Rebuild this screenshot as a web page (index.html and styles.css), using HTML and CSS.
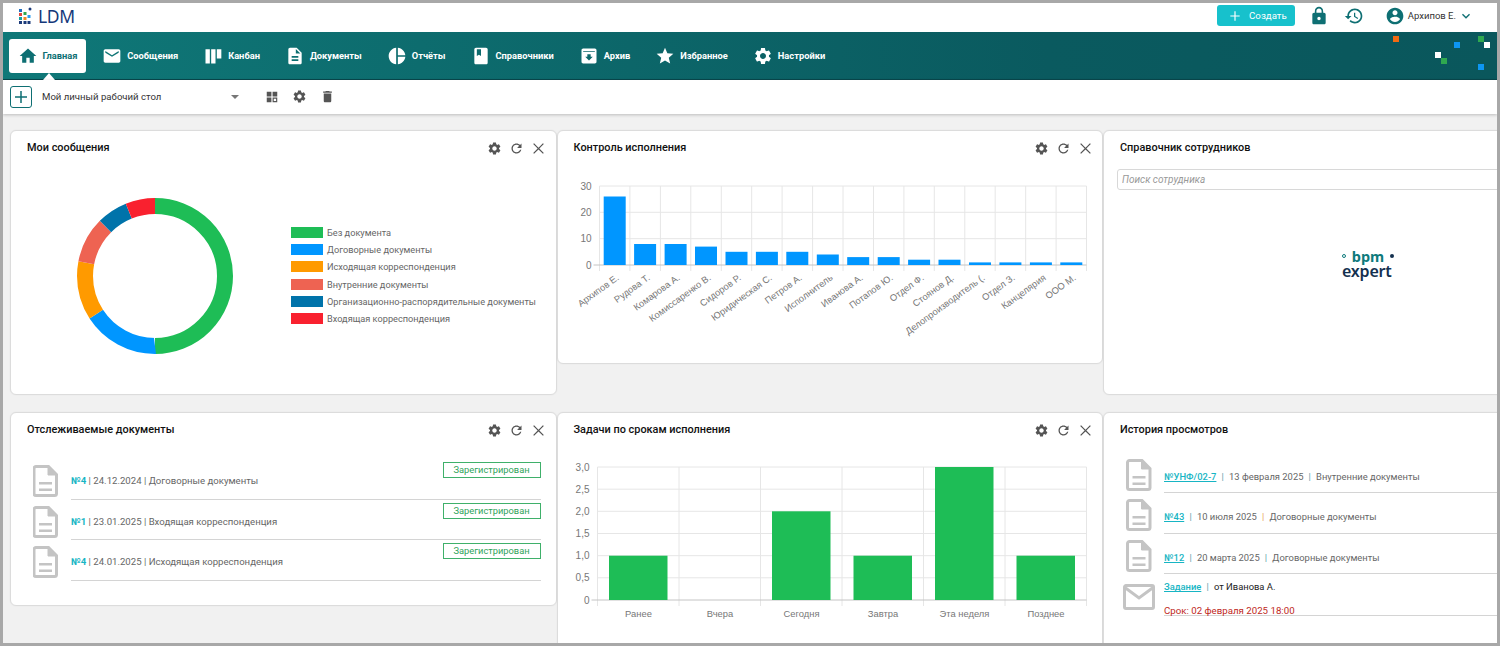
FILE: index.html
```html
<!DOCTYPE html>
<html lang="ru">
<head>
<meta charset="utf-8">
<title>LDM</title>
<link rel="stylesheet" href="styles.css">
</head>
<body>
<svg class="sprite" aria-hidden="true">
  <symbol id="i-home" viewBox="0 0 24 24"><path d="M10 20v-6h4v6h5v-8h3L12 3 2 12h3v8z"/></symbol>
  <symbol id="i-mail" viewBox="0 0 24 24"><path d="M20 4H4c-1.1 0-1.99.9-1.99 2L2 18c0 1.1.9 2 2 2h16c1.1 0 2-.9 2-2V6c0-1.1-.9-2-2-2zm0 4l-8 5-8-5V6l8 5 8-5v2z"/></symbol>
  <symbol id="i-kanban" viewBox="0 0 24 24"><path d="M3 4h5.2v17H3zM9.8 4H15v17H9.8zM16.6 4H22v11h-5.4z"/></symbol>
  <symbol id="i-doc" viewBox="0 0 24 24"><path d="M14 2H6c-1.1 0-1.99.9-1.99 2L4 20c0 1.1.89 2 1.99 2H18c1.1 0 2-.9 2-2V8l-6-6zm2 16H8v-2h8v2zm0-4H8v-2h8v2zm-3-5V3.5L18.5 9H13z"/></symbol>
  <symbol id="i-pie" viewBox="0 0 24 24"><path d="M11 2v20c-5.07-.5-9-4.79-9-10s3.93-9.5 9-10zm2.03 0v8.99H22c-.47-4.74-4.24-8.52-8.97-8.99zm0 11.01V22c4.74-.47 8.5-4.25 8.97-8.99h-8.97z"/></symbol>
  <symbol id="i-book" viewBox="0 0 24 24"><path d="M18 2H6c-1.1 0-2 .9-2 2v16c0 1.1.9 2 2 2h12c1.1 0 2-.9 2-2V4c0-1.1-.9-2-2-2zM7 4h5v8l-2.5-1.5L7 12V4z"/></symbol>
  <symbol id="i-archive" viewBox="0 0 24 24"><path d="M5 3h14c1.1 0 2 .9 2 2v14c0 1.1-.9 2-2 2H5c-1.1 0-2-.9-2-2V5c0-1.100.9-2 2-2zm0 3v1h14V6H5zm7 11.500l4.500-4.500H14v-3h-4v3H7.500L12 17.500z"/></symbol>
  <symbol id="i-star" viewBox="0 0 24 24"><path d="M12 17.270L18.180 21l-1.640-7.030L22 9.240l-7.190-.610L12 2 9.190 8.630 2 9.240l5.460 4.730L5.820 21z"/></symbol>
  <symbol id="i-gear" viewBox="0 0 24 24"><path d="M19.140 12.940c.04-.3.06-.61.06-.94 0-.32-.02-.64-.07-.94l2.030-1.580c.18-.14.23-.41.12-.61l-1.920-3.320c-.12-.22-.37-.29-.59-.22l-2.390.96c-.5-.38-1.030-.7-1.620-.94l-.36-2.540c-.04-.24-.24-.41-.48-.41h-3.840c-.24 0-.43.17-.47.41l-.36 2.540c-.59.24-1.130.57-1.620.94l-2.390-.96c-.22-.08-.47 0-.59.22L2.740 8.870c-.12.21-.08.47.12.61l2.030 1.580c-.05.3-.09.63-.09.94s.02.64.07.94l-2.030 1.580c-.18.14-.23.41-.12.61l1.920 3.320c.12.22.37.29.59.22l2.390-.96c.5.38 1.030.7 1.620.94l.36 2.540c.05.24.24.41.48.41h3.840c.24 0 .44-.17.47-.41l.36-2.540c.59-.24 1.130-.56 1.620-.94l2.390.96c.22.08.47 0 .59-.22l1.920-3.320c.12-.22.07-.47-.12-.61l-2.010-1.580zM12 15.600c-1.980 0-3.600-1.620-3.600-3.600s1.620-3.600 3.600-3.600 3.600 1.620 3.600 3.600-1.620 3.600-3.600 3.600z"/></symbol>
  <symbol id="i-lock" viewBox="0 0 24 24"><path d="M18 8h-1V6c0-2.760-2.240-5-5-5S7 3.240 7 6v2H6c-1.100 0-2 .9-2 2v10c0 1.100.9 2 2 2h12c1.100 0 2-.9 2-2V10c0-1.100-.9-2-2-2zm-6 9c-1.100 0-2-.9-2-2s.9-2 2-2 2 .9 2 2-.9 2-2 2zm3.100-9H8.900V6c0-1.710 1.390-3.100 3.100-3.100 1.710 0 3.100 1.390 3.100 3.100v2z"/></symbol>
  <symbol id="i-history" viewBox="0 0 24 24"><path d="M13 3c-4.970 0-9 4.030-9 9H1l3.890 3.890.07.14L9 12H6c0-3.870 3.130-7 7-7s7 3.130 7 7-3.130 7-7 7c-1.930 0-3.680-.79-4.940-2.060l-1.420 1.420C8.270 19.990 10.510 21 13 21c4.970 0 9-4.030 9-9s-4.030-9-9-9zm-1 5v5l4.280 2.540.72-1.210-3.500-2.080V8H12z"/></symbol>
  <symbol id="i-user" viewBox="0 0 24 24"><path d="M12 2C6.480 2 2 6.480 2 12s4.480 10 10 10 10-4.480 10-10S17.520 2 12 2zm0 3c1.660 0 3 1.340 3 3s-1.340 3-3 3-3-1.340-3-3 1.340-3 3-3zm0 14.200c-2.500 0-4.710-1.280-6-3.220.03-1.990 4-3.080 6-3.080 1.990 0 5.970 1.090 6 3.080-1.290 1.940-3.500 3.220-6 3.220z"/></symbol>
  <symbol id="i-chevron" viewBox="0 0 24 24"><path d="M7.410 8.590L12 13.170l4.590-4.580L18 10l-6 6-6-6z"/></symbol>
  <symbol id="i-refresh" viewBox="0 0 24 24"><path d="M17.650 6.350C16.200 4.900 14.210 4 12 4c-4.420 0-7.990 3.580-7.990 8s3.570 8 7.990 8c3.730 0 6.840-2.550 7.730-6h-2.080c-.82 2.330-3.040 4-5.650 4-3.310 0-6-2.690-6-6s2.690-6 6-6c1.660 0 3.140.69 4.220 1.780L13 11h7V4l-2.350 2.350z"/></symbol>
  <symbol id="i-close" viewBox="0 0 24 24"><path d="M20.500 4.900L19.100 3.500 12 10.600 4.900 3.500 3.500 4.900 10.600 12l-7.100 7.100 1.400 1.400 7.100-7.100 7.100 7.100 1.400-1.400-7.100-7.100z"/></symbol>
  <symbol id="i-trash" viewBox="0 0 24 24"><path d="M6 19c0 1.100.9 2 2 2h8c1.100 0 2-.9 2-2V7H6v12zM19 4h-3.500l-1-1h-5l-1 1H5v2h14V4z"/></symbol>
  <symbol id="i-board" viewBox="0 0 24 24"><path d="M3 3h8v8H3zM13 3h8v8h-8zM3 13h8v8H3zM13 13h8v8h-8zm2 2v4h4v-4z" fill-rule="evenodd"/></symbol>
  <symbol id="i-plus" viewBox="0 0 24 24"><path d="M20 13h-7v7h-2v-7H4v-2h7V4h2v7h7z"/></symbol>
  <symbol id="i-file" viewBox="0 0 25 32"><path d="M3 1.500h12.500l8 8V28.500a2 2 0 0 1-2 2H3a2 2 0 0 1-2-2V3.500a2 2 0 0 1 2-2z" fill="none" stroke="currentColor" stroke-width="3"/><path d="M15 1.500v8.500h8.500z" stroke="currentColor" stroke-width="1"/><path d="M6 17h13v2.500H6zM6 23.500h13V26H6z"/></symbol>
  <symbol id="i-envelope" viewBox="0 0 32 26"><path d="M3 1.500h26a1.500 1.500 0 0 1 1.500 1.500v20a1.500 1.500 0 0 1-1.500 1.500H3a1.500 1.500 0 0 1-1.500-1.500V3A1.500 1.500 0 0 1 3 1.500z" fill="none" stroke="currentColor" stroke-width="3"/><path d="M2.500 4L16 14 29.500 4" fill="none" stroke="currentColor" stroke-width="3"/></symbol>
</svg>

<div class="frame">
  <header class="topbar">
    <div class="brand">
      <svg class="brand-mark" viewBox="18 7 14 18">
        <rect x="19" y="9" width="3" height="3" fill="#1f6fc0"/><rect x="19" y="13" width="3" height="3" fill="#e2453c"/><rect x="19" y="17" width="3" height="3" fill="#12a0a0"/><rect x="19" y="21" width="3" height="3" fill="#1b3a7a"/>
        <rect x="23.500" y="12" width="3" height="3" fill="#2fa84f"/><rect x="23.500" y="17" width="3" height="3" fill="#f08a24"/><rect x="23.500" y="21" width="3" height="3" fill="#1b3a7a"/>
        <rect x="27.500" y="15" width="3" height="3" fill="#2a9df0"/><rect x="27.500" y="21" width="3" height="3" fill="#1b3a7a"/><circle cx="30" cy="9" r="1.500" fill="#1b3a7a"/>
      </svg>
      <span class="brand-name">LDM</span>
    </div>
    <div class="top-actions">
      <button class="create"><svg class="ic-13"><use href="#i-plus"/></svg><span>Создать</span></button>
      <svg class="top-ic lock"><use href="#i-lock"/></svg>
      <svg class="top-ic hist"><use href="#i-history"/></svg>
      <div class="user"><svg class="user-ic"><use href="#i-user"/></svg><span>Архипов Е.</span><svg class="chev"><use href="#i-chevron"/></svg></div>
    </div>
  </header>

  <nav class="nav">
    <a class="nav-item active"><svg><use href="#i-home"/></svg><span>Главная</span></a>
    <a class="nav-item"><svg><use href="#i-mail"/></svg><span>Сообщения</span></a>
    <a class="nav-item"><svg><use href="#i-kanban"/></svg><span>Канбан</span></a>
    <a class="nav-item"><svg><use href="#i-doc"/></svg><span>Документы</span></a>
    <a class="nav-item"><svg><use href="#i-pie"/></svg><span>Отчёты</span></a>
    <a class="nav-item"><svg><use href="#i-book"/></svg><span>Справочники</span></a>
    <a class="nav-item"><svg><use href="#i-archive"/></svg><span>Архив</span></a>
    <a class="nav-item"><svg><use href="#i-star"/></svg><span>Избранное</span></a>
    <a class="nav-item"><svg><use href="#i-gear"/></svg><span>Настройки</span></a>
    <svg class="nav-deco" viewBox="1393 39 97 34">
      <rect x="1393" y="39" width="6" height="6" fill="#f26a12"/>
      <rect x="1454" y="45" width="6" height="6" fill="#0d96f2"/>
      <rect x="1478" y="39" width="6" height="6" fill="#2fa84f"/>
      <rect x="1484" y="45" width="6" height="6" fill="#fff"/>
      <rect x="1435" y="55" width="6" height="6" fill="#fff"/>
      <rect x="1441" y="61" width="6" height="6" fill="#2fa84f"/>
      <rect x="1478" y="67" width="6" height="6" fill="#0d96f2"/>
    </svg>
  </nav>

  <div class="toolbar">
    <button class="add"><svg><use href="#i-plus"/></svg></button>
    <div class="desk-select"><span>Мой личный рабочий стол</span><i class="caret"></i></div>
    <svg class="tool tool-board"><use href="#i-board"/></svg>
    <svg class="tool tool-gear"><use href="#i-gear"/></svg>
    <svg class="tool tool-trash"><use href="#i-trash"/></svg>
  </div>

  <main class="board">
    <section class="card card-messages">
      <div class="card-head"><h2>Мои сообщения</h2><div class="card-tools"><svg><use href="#i-gear"/></svg><svg><use href="#i-refresh"/></svg><svg><use href="#i-close"/></svg></div></div>
      <div class="donut-body">
        <svg class="donut" viewBox="0 0 160 160">
          <g fill="none" stroke-width="16" transform="rotate(-90 80 80)">
            <circle cx="80" cy="80" r="70" pathLength="360" stroke="#1ebd56" stroke-dasharray="180 180" stroke-dashoffset="0"/>
            <circle cx="80" cy="80" r="70" pathLength="360" stroke="#0096ff" stroke-dasharray="57 303" stroke-dashoffset="-180"/>
            <circle cx="80" cy="80" r="70" pathLength="360" stroke="#ff9a00" stroke-dasharray="44 316" stroke-dashoffset="-237"/>
            <circle cx="80" cy="80" r="70" pathLength="360" stroke="#ee6352" stroke-dasharray="34 326" stroke-dashoffset="-281"/>
            <circle cx="80" cy="80" r="70" pathLength="360" stroke="#0073aa" stroke-dasharray="23 337" stroke-dashoffset="-315"/>
            <circle cx="80" cy="80" r="70" pathLength="360" stroke="#f9212f" stroke-dasharray="22 338" stroke-dashoffset="-338"/>
          </g>
        </svg>
        <ul class="legend">
          <li><i class="sw sw-green"></i>Без документа</li>
          <li><i class="sw sw-blue"></i>Договорные документы</li>
          <li><i class="sw sw-orange"></i>Исходящая корреспонденция</li>
          <li><i class="sw sw-salmon"></i>Внутренние документы</li>
          <li><i class="sw sw-navy"></i>Организационно-распорядительные документы</li>
          <li><i class="sw sw-red"></i>Входящая корреспонденция</li>
        </ul>
      </div>
    </section>

    <section class="card card-control">
      <div class="card-head"><h2>Контроль исполнения</h2><div class="card-tools"><svg><use href="#i-gear"/></svg><svg><use href="#i-refresh"/></svg><svg><use href="#i-close"/></svg></div></div>
      <svg class="chart chart-control" viewBox="557.500 165 545 198">
        <g class="grid">
          <path d="M599 186H1086M599 212.300H1086M599 238.700H1086"/>
          <path d="M599 186V271M629.400 186V271M659.900 186V271M690.300 186V271M720.800 186V271M751.200 186V271M781.600 186V271M812.100 186V271M842.500 186V271M873 186V271M903.400 186V271M933.800 186V271M964.300 186V271M994.700 186V271M1025.200 186V271M1055.600 186V271M1086 186V271"/>
        </g>
        <path class="axis" d="M593 265H1086"/>
        <g fill="#0096ff">
          <rect x="603.200" y="196.500" width="22" height="68.500"/><rect x="633.600" y="244" width="22" height="21"/><rect x="664.100" y="244" width="22" height="21"/><rect x="694.500" y="246.600" width="22" height="18.400"/>
          <rect x="725" y="251.800" width="22" height="13.200"/><rect x="755.400" y="251.800" width="22" height="13.200"/><rect x="785.800" y="251.800" width="22" height="13.200"/><rect x="816.300" y="254.500" width="22" height="10.500"/>
          <rect x="846.700" y="257.100" width="22" height="7.900"/><rect x="877.200" y="257.100" width="22" height="7.900"/><rect x="907.600" y="259.700" width="22" height="5.300"/><rect x="938" y="259.700" width="22" height="5.300"/>
          <rect x="968.500" y="262.400" width="22" height="2.600"/><rect x="998.900" y="262.400" width="22" height="2.600"/><rect x="1029.400" y="262.400" width="22" height="2.600"/><rect x="1059.800" y="262.400" width="22" height="2.600"/>
        </g>
        <g class="y-labels">
          <text x="591" y="189.500">30</text><text x="591" y="215.800">20</text><text x="591" y="242.200">10</text><text x="591" y="268.500">0</text>
        </g>
        <g class="x-labels-rot">
          <text transform="translate(619 279) rotate(-36)">Архипов Е.</text>
          <text transform="translate(650 279) rotate(-36)">Рудова Т.</text>
          <text transform="translate(680 279) rotate(-36)">Комарова А.</text>
          <text transform="translate(711 279) rotate(-36)">Комиссаренко В.</text>
          <text transform="translate(741 279) rotate(-36)">Сидоров Р.</text>
          <text transform="translate(772 279) rotate(-36)">Юридическая С.</text>
          <text transform="translate(802 279) rotate(-36)">Петров А.</text>
          <text transform="translate(833 279) rotate(-36)">Исполнитель</text>
          <text transform="translate(863 279) rotate(-36)">Иванова А.</text>
          <text transform="translate(893 279) rotate(-36)">Потапов Ю.</text>
          <text transform="translate(924 279) rotate(-36)">Отдел Ф.</text>
          <text transform="translate(954 279) rotate(-36)">Стоянов Д.</text>
          <text transform="translate(985 279) rotate(-36)">Делопроизводитель (.</text>
          <text transform="translate(1015 279) rotate(-36)">Отдел З.</text>
          <text transform="translate(1046 279) rotate(-36)">Канцелярия</text>
          <text transform="translate(1076 279) rotate(-36)">ООО М.</text>
        </g>
      </svg>
    </section>

    <section class="card card-staff">
      <div class="card-head"><h2>Справочник сотрудников</h2></div>
      <input class="staff-search" type="text" placeholder="Поиск сотрудника">
      <div class="bpm-logo">
        <div class="bpm-line"><i class="dot-ring"></i><span>bpm</span><i class="dot-solid"></i></div>
        <div class="expert-line">expert</div>
      </div>
    </section>

    <section class="card card-tracked">
      <div class="card-head"><h2>Отслеживаемые документы</h2><div class="card-tools"><svg><use href="#i-gear"/></svg><svg><use href="#i-refresh"/></svg><svg><use href="#i-close"/></svg></div></div>
      <ul class="tracked-list">
        <li><svg class="file"><use href="#i-file"/></svg><div class="row"><p><a class="num">№4</a> | 24.12.2024 | Договорные документы</p><span class="badge">Зарегистрирован</span></div></li>
        <li><svg class="file"><use href="#i-file"/></svg><div class="row"><p><a class="num">№1</a> | 23.01.2025 | Входящая корреспонденция</p><span class="badge">Зарегистрирован</span></div></li>
        <li><svg class="file"><use href="#i-file"/></svg><div class="row"><p><a class="num">№4</a> | 24.01.2025 | Исходящая корреспонденция</p><span class="badge">Зарегистрирован</span></div></li>
      </ul>
    </section>

    <section class="card card-tasks">
      <div class="card-head"><h2>Задачи по срокам исполнения</h2><div class="card-tools"><svg><use href="#i-gear"/></svg><svg><use href="#i-refresh"/></svg><svg><use href="#i-close"/></svg></div></div>
      <svg class="chart chart-tasks" viewBox="557.500 447 545 190">
        <g class="grid">
          <path d="M597 467H1086M597 489.200H1086M597 511.300H1086M597 533.500H1086M597 555.700H1086M597 577.800H1086"/>
          <path d="M597 467V606M678.500 467V606M760 467V606M841.500 467V606M923 467V606M1004.500 467V606M1086 467V606"/>
        </g>
        <path class="axis" d="M591 600H1086"/>
        <g fill="#1ebd56">
          <rect x="608.500" y="555.700" width="58.500" height="44.300"/>
          <rect x="771.500" y="511.300" width="58.500" height="88.700"/>
          <rect x="853" y="555.700" width="58.500" height="44.300"/>
          <rect x="934.500" y="467" width="58.500" height="133"/>
          <rect x="1016" y="555.700" width="58.500" height="44.300"/>
        </g>
        <g class="y-labels">
          <text x="589" y="470.500">3,0</text><text x="589" y="492.700">2,5</text><text x="589" y="514.800">2,0</text><text x="589" y="537">1,5</text><text x="589" y="559.200">1,0</text><text x="589" y="581.300">0,5</text><text x="589" y="603.500">0</text>
        </g>
        <g class="x-labels">
          <text x="638" y="617">Ранее</text><text x="719.500" y="617">Вчера</text><text x="801" y="617">Сегодня</text><text x="882.500" y="617">Завтра</text><text x="964" y="617">Эта неделя</text><text x="1045.500" y="617">Позднее</text>
        </g>
      </svg>
    </section>

    <section class="card card-history">
      <div class="card-head"><h2>История просмотров</h2></div>
      <ul class="history-list">
        <li><svg class="file"><use href="#i-file"/></svg><div class="row"><p><a class="link">№УНФ/02-7</a><b class="sep">|</b>13 февраля 2025<b class="sep">|</b>Внутренние документы</p></div></li>
        <li><svg class="file"><use href="#i-file"/></svg><div class="row"><p><a class="link">№43</a><b class="sep">|</b>10 июля 2025<b class="sep sep-orange">|</b>Договорные документы</p></div></li>
        <li><svg class="file"><use href="#i-file"/></svg><div class="row"><p><a class="link">№12</a><b class="sep">|</b>20 марта 2025<b class="sep">|</b>Договорные документы</p></div></li>
        <li class="task"><svg class="envelope"><use href="#i-envelope"/></svg><div class="row"><p><a class="link">Задание</a><b class="sep">|</b><span class="from">от Иванова А.</span></p><p class="due">Срок: 02 февраля 2025 18:00</p></div></li>
      </ul>
    </section>
  </main>
</div>
</body>
</html>
```

FILE: styles.css
```css
* { box-sizing: border-box; }
html, body { margin: 0; padding: 0; }
body { font-family: Roboto, "Liberation Sans", sans-serif; background: #fff; overflow: hidden; }
.sprite { display: none; }
svg { fill: currentColor; }
ul { list-style: none; margin: 0; padding: 0; }
p { margin: 0; }
a { cursor: pointer; }

.frame { width: 1500px; height: 646px; border: 3px solid #a8a8a8; background: #f1f1f1; display: flex; flex-direction: column; overflow: hidden; }

/* top bar */
.topbar { height: 29px; flex: none; background: #fff; display: flex; align-items: center; justify-content: space-between; padding: 0 23px 4px 15px; }
.brand { display: flex; align-items: center; gap: 6px; }
.brand-mark { width: 14px; height: 18px; }
.brand-name { font-family: "Noto Sans", sans-serif; font-size: 17.500px; line-height: 20px; letter-spacing: -.3px; color: #14387a; }
.top-actions { display: flex; align-items: center; }
.create { width: 78px; height: 21px; border: 0; border-radius: 3px; background: #17c1cc; color: #fff; display: flex; align-items: center; padding: 0 0 0 11px; gap: 7px; font: 400 9.700px Roboto, sans-serif; }
.ic-13 { width: 14px; height: 14px; }
.top-ic { color: #0e6f73; }
.lock { width: 20px; height: 20px; margin-left: 13.500px; }
.hist { width: 20px; height: 20px; margin-left: 15.500px; }
.user { display: flex; align-items: center; margin-left: 21px; font-size: 9.500px; color: #333; }
.user-ic { width: 20px; height: 20px; color: #0e6f73; margin-right: 2.700px; }
.chev { width: 16px; height: 16px; margin-left: 2px; color: #0e6f73; }

/* nav */
.nav { position: relative; height: 48px; flex: none; background: linear-gradient(90deg, #0f7878, #0a5a5f 70%, #0a575c); border-bottom: 1px solid #09474c; display: flex; align-items: flex-start; padding: 7px 0 0 6px; gap: 9px; }
.nav-item { position: relative; height: 34px; display: flex; align-items: center; gap: 5px; padding: 0 8px; color: #fff; font-size: 9.300px; font-weight: 700; white-space: nowrap; }
.nav-item span { margin-top: -1px; }
.nav-item svg { width: 20px; height: 20px; flex: none; }
.nav-item.active { background: #fff; color: #0e6f73; border-radius: 3px; padding: 0 8px 0 8.500px; margin-right: -.3px; }
.nav-item.active::after { content: ""; position: absolute; left: 34px; bottom: -7px; border: solid transparent; border-width: 0 6px 7px; border-bottom-color: #fff; }
.nav-deco { position: absolute; left: 1390px; top: 4px; width: 97px; height: 34px; }

/* toolbar */
.toolbar { position: relative; z-index: 1; height: 34px; flex: none; background: #fff; box-shadow: 0 1px 3px rgba(0,0,0,.22); display: flex; align-items: center; padding-left: 6.500px; }
.add { width: 22px; height: 22px; padding: 1px; border: 1px solid #0e6f73; border-radius: 3px; background: #fff; color: #0e6f73; display: flex; align-items: center; justify-content: center; }
.add svg { width: 18px; height: 18px; }
.desk-select { width: 197px; margin-left: 10.500px; margin-top: -1px; display: flex; align-items: center; justify-content: space-between; font-size: 9.600px; color: #333; }
.caret { border: solid transparent; border-width: 4px 4.500px 0; border-top-color: #777; margin-right: 0; }
.tool { width: 15px; height: 15px; color: #555; margin-top: -1px; }
.tool-board { width: 14px; height: 14px; margin-left: 26px; }
.tool-gear { width: 15px; height: 15px; margin-left: 13px; }
.tool-trash { margin-left: 13px; }

/* board */
.board { flex: 1; min-height: 0; padding: 16px 0 0 7px; display: grid; grid-template-columns: 546.500px 546.500px 420px; grid-template-rows: 265px 260px; row-gap: 17px; overflow: hidden; }
.card { background: #fff; border: 1px solid #dcdcdc; border-radius: 6px; box-shadow: 0 0 2px rgba(0,0,0,.06); min-width: 0; overflow: hidden; }
.card-control { height: 234px; }
.card-tracked { height: 194px; }
.card-head { height: 34px; display: flex; align-items: center; justify-content: space-between; padding: 0 10px 0 16px; }
.card-control .card-head, .card-tasks .card-head { padding-right: 9px; }
.card-head h2 { margin: -2px 0 0; font-size: 10.900px; font-weight: 500; color: #111; }
.card-tools { display: flex; align-items: center; gap: 7px; margin-top: 1px; color: #555; }
.card-tools svg { width: 15px; height: 15px; }

/* donut */
.donut-body { display: flex; align-items: flex-start; padding-left: 64px; }
.donut { width: 160px; height: 160px; margin-top: 31px; flex: none; }
.legend { margin: 58.500px 0 0 56px; }
.legend li { height: 17.300px; display: flex; align-items: center; font-size: 9.200px; color: #666; white-space: nowrap; }
.sw { width: 32px; height: 11px; margin-right: 4px; flex: none; }
.sw-green { background: #1ebd56; }
.sw-blue { background: #0096ff; }
.sw-orange { background: #ff9a00; }
.sw-salmon { background: #ee6352; }
.sw-navy { background: #0073aa; }
.sw-red { background: #f9212f; }

/* charts */
.chart { display: block; width: 545px; }
.chart-control { height: 198px; }
.chart-tasks { height: 190px; }
.grid path { fill: none; stroke: #e6e6e6; stroke-width: 1; }
.axis { fill: none; stroke: #c4c4c4; stroke-width: 1; }
.y-labels text { font: 10px "Liberation Sans", sans-serif; fill: #777; text-anchor: end; }
.x-labels text { font: 9.400px "Liberation Sans", sans-serif; fill: #777; text-anchor: middle; }
.x-labels-rot text { font: 9.400px "Liberation Sans", sans-serif; fill: #777; text-anchor: end; }

/* staff */
.staff-search { display: block; width: 420px; height: 21px; margin: 4px 0 0 13px; padding: 0 4px; border: 1px solid #d8d8d8; border-radius: 3px; font: italic 10px Roboto, sans-serif; outline: 0; }
.staff-search::placeholder { color: #999; opacity: 1; }
.bpm-logo { width: 52px; margin: 59px 0 0 238px; font-family: "Noto Sans", sans-serif; }
.bpm-line { display: flex; align-items: center; justify-content: space-between; height: 14px; line-height: 14px; color: #0e7a7c; font-size: 14.500px; font-weight: 700; }
.dot-ring { width: 4px; height: 4px; border: 1px solid #0e7a7c; border-radius: 50%; }
.dot-solid { width: 4px; height: 4px; background: #14304f; border-radius: 50%; }
.expert-line { color: #14304f; font-size: 16px; line-height: 16px; font-weight: 600; letter-spacing: -.2px; }

/* lists */
.tracked-list { margin-top: 12px; padding: 0 15px 0 22px; }
.tracked-list li { height: 40.500px; display: flex; align-items: stretch; }
.file { width: 25px; height: 32px; flex: none; margin-top: 6px; color: #c4c4c4; }
.row { flex: 1; min-width: 0; border-bottom: 1px solid #d4d4d4; font-size: 9.600px; color: #666; }
.tracked-list .file { margin-right: 13px; }
.tracked-list .row { display: flex; justify-content: space-between; align-items: flex-start; }
.tracked-list p { margin-top: 15px; line-height: 14px; }
.num { color: #17b5c4; font-weight: 700; }
.badge { margin-top: 3px; width: 98px; height: 16px; border: 1px solid #3fb06a; color: #2fa35a; text-align: center; font-size: 9.300px; line-height: 14px; }

.history-list { margin-top: 5.500px; padding-left: 22px; }
.history-list li { height: 40.500px; display: flex; align-items: stretch; }
.history-list .file { width: 26px; margin-right: 12px; }
.history-list .row { font-size: 9.400px; }
.history-list .row p { margin-top: 17px; line-height: 14px; }
.link { color: #17b5c4; font-weight: 500; text-decoration: underline; }
.sep { font-weight: 400; color: #5aa0a8; margin: 0 5.200px; }
.sep-orange { color: #e8a060; }
.history-list .task { height: 42px; }
.envelope { width: 32px; height: 26px; margin: 10px 9px 0 -3px; flex: none; color: #c4c4c4; }
.history-list .row p.due { margin-top: 10px; font-size: 9.700px; color: #c0281c; }
.history-list .task .row p:first-child { margin-top: 6px; }
.from { color: #222; }
```
